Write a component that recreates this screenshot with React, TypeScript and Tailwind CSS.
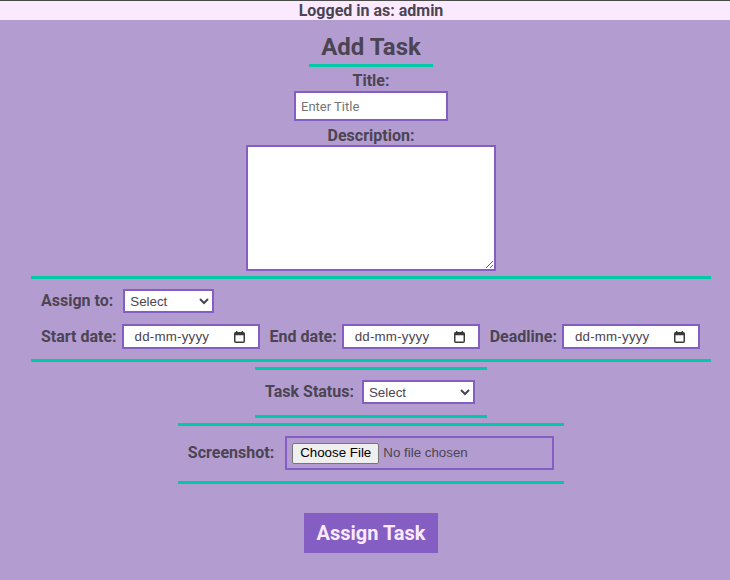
import React from "react";

const TEAL = "border-[#00c9a7]";

function CalendarIcon() {
  return (
    <svg width="11" height="12" viewBox="0 0 11 12" className="shrink-0">
      <rect x="2" y="0" width="1.4" height="2.5" fill="#3a3a3a" />
      <rect x="7.6" y="0" width="1.4" height="2.5" fill="#3a3a3a" />
      <rect x="0.75" y="1.75" width="9.5" height="9.5" rx="1" fill="none" stroke="#3a3a3a" strokeWidth="1.5" />
      <rect x="0.75" y="1.75" width="9.5" height="2.5" fill="#3a3a3a" />
    </svg>
  );
}

function DateField() {
  return (
    <div className="shrink-0 ml-[5px] w-[138px] h-[25px] border-2 border-[#845ec2] bg-white flex items-center pl-[11px] pr-[13px] justify-between text-[13.33px] text-[#4b4453] [font-family:'Liberation_Sans',Arial,sans-serif]">
      <span className="tracking-[0.2px]">dd-mm-yyyy</span>
      <CalendarIcon />
    </div>
  );
}

const LBL = "shrink-0 whitespace-nowrap text-[16px] font-bold";

export default function App() {
  return (
    <div className="w-full min-h-[580px] overflow-hidden bg-[#b39cd0] text-[#4b4453] [font-family:Roboto,'Liberation_Sans',sans-serif]">
      <div className="w-[742px] flex flex-col items-center">
        <div className="w-full h-[20px] border-t border-[#4a4a4a] bg-[#fbeaff] text-center text-[16px] font-bold leading-[19px]">
          Logged in as: admin
        </div>
        <h2 className={`mt-[13px] w-[124px] text-center text-[24px] font-bold leading-[28px] pb-[3px] border-b-[3px] ${TEAL}`}>
          Add Task
        </h2>
        <label className="mt-[4px] text-[16px] font-bold leading-[19px]">Title:</label>
        <input
          className="mt-[1px] w-[154px] h-[30px] border-2 border-[#845ec2] bg-white px-[5px] text-[13px] placeholder:text-[#757575] outline-none"
          placeholder="Enter Title"
        />
        <label className="mt-[5px] text-[16px] font-bold leading-[19px]">Description:</label>
        <textarea className="w-[250px] h-[126px] border-2 border-[#845ec2] bg-white outline-none" />

        <div className={`mt-[5px] w-[680px] border-y-[3px] ${TEAL} px-[10px] pt-[10px] pb-[10px]`}>
          <div className="flex items-center h-[24px]">
            <span className={LBL}>Assign to:</span>
            <select className="shrink-0 ml-[10px] w-[91px] h-[24px] border-2 border-[#845ec2] bg-white text-[13.33px] [font-family:'Liberation_Sans',Arial,sans-serif] pl-[1px]">
              <option>Select</option>
            </select>
          </div>
          <div className="mt-[11px] flex items-center h-[25px] whitespace-nowrap">
            <span className={LBL}>Start date:</span>
            <DateField />
            <span className={`ml-[10px] ${LBL}`}>End date:</span>
            <DateField />
            <span className={`ml-[10px] ${LBL}`}>Deadline:</span>
            <DateField />
          </div>
        </div>

        <div className={`mt-[5px] w-[232px] border-y-[3px] ${TEAL} px-[10px] pt-[10px] pb-[11px] flex items-center`}>
          <span className={LBL}>Task Status:</span>
          <select className="shrink-0 ml-[8px] w-[113px] h-[24px] border-2 border-[#845ec2] bg-white text-[13.33px] [font-family:'Liberation_Sans',Arial,sans-serif] pl-[1px]">
            <option>Select</option>
          </select>
        </div>

        <div className={`mt-[5px] w-[386px] border-y-[3px] ${TEAL} px-[10px] pt-[10px] pb-[11px] flex items-center justify-center`}>
          <span className={LBL}>Screenshot:</span>
          <div className="shrink-0 ml-[11px] w-[269px] h-[34px] border-2 border-[#845ec2] flex items-center pl-[5px] text-[13.33px] [font-family:'Liberation_Sans',Arial,sans-serif] whitespace-nowrap">
            <span className="h-[21px] px-[7px] flex items-center bg-[#efefef] border border-[#767676] rounded-[2px] text-black">
              Choose File
            </span>
            <span className="ml-[4px] text-[#4b4453]">No file chosen</span>
          </div>
        </div>

        <button className="mt-[29px] w-[134px] h-[40px] bg-[#845ec2] text-[#fbeaff] text-[20px] font-bold">
          Assign Task
        </button>
      </div>
    </div>
  );
}
